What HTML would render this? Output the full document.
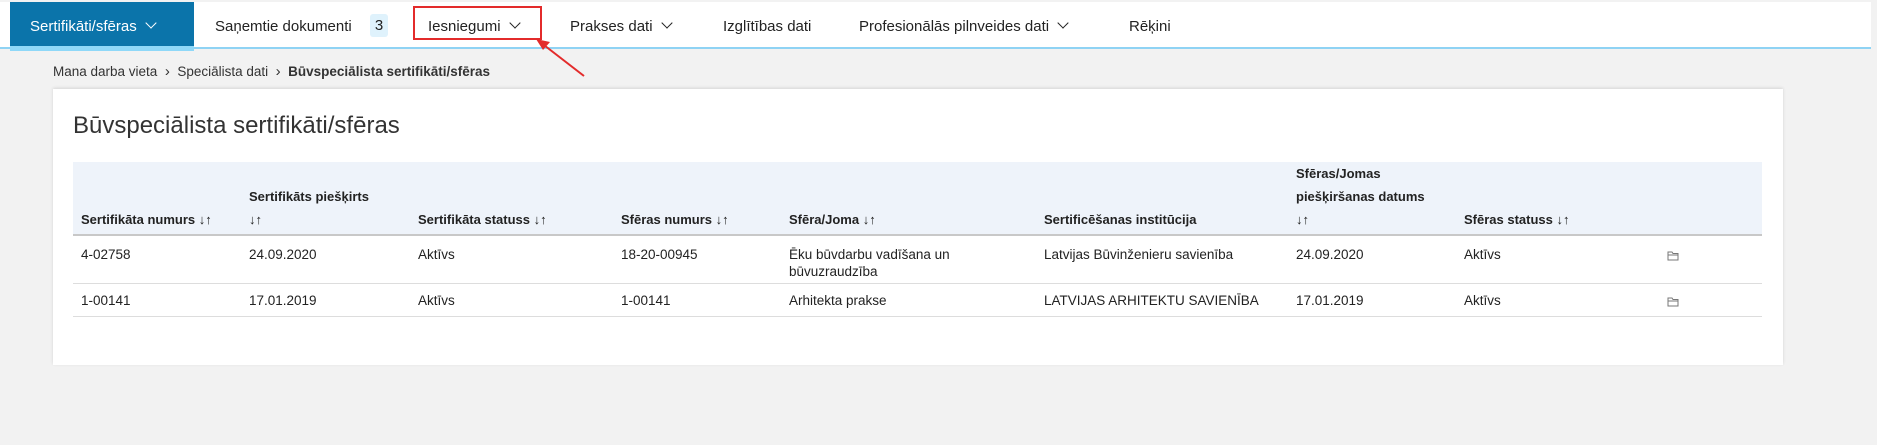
<!DOCTYPE html>
<html><head><meta charset="utf-8"><style>
*{margin:0;padding:0;box-sizing:border-box}
body{width:1877px;height:445px;background:#f2f2f2;font-family:"Liberation Sans",Arial,sans-serif;position:relative;overflow:hidden;color:#222}
.nav{position:absolute;left:0;top:2px;width:1871px;height:47px;background:#fff;border-bottom:2px solid #8fd3f4}
.a{position:absolute;white-space:nowrap}
.tab{left:10px;top:2px;width:184px;height:49px;background:#0b74aa;border-bottom:5px solid #8fd8f8}
.ni{font-size:15px;color:#222;top:18px}
.chev{display:inline-block;width:8px;height:8px;border-right:1.3px solid currentColor;border-bottom:1.3px solid currentColor;transform:rotate(45deg);margin-left:10px;position:relative;top:-4px}
.card{left:53px;top:89px;width:1730px;height:276px;background:#fff;box-shadow:0 -1px 3px rgba(0,0,0,.12)}
.th{font-size:13px;font-weight:bold;color:#222;line-height:23px}
.td{font-size:13.5px;color:#222;line-height:17px}
</style></head><body>
<div class="nav"></div>
<div class="a tab"></div>
<div class="a ni" style="left:30px;color:#fff">Sertifikāti/sfēras<span class="chev"></span></div>
<div class="a ni" style="left:215px">Saņemtie dokumenti</div>
<div class="a" style="left:370px;top:14px;width:18px;height:23px;background:#dff2fc;border-radius:3px;font-size:15px;text-align:center;line-height:23px">3</div>
<div class="a" style="left:413px;top:6px;width:129px;height:34px;border:2px solid #e32b2b"></div>
<div class="a ni" style="left:428px">Iesniegumi<span class="chev"></span></div>
<div class="a ni" style="left:570px">Prakses dati<span class="chev"></span></div>
<div class="a ni" style="left:723px">Izglītības dati</div>
<div class="a ni" style="left:859px">Profesionālās pilnveides dati<span class="chev"></span></div>
<div class="a ni" style="left:1129px">Rēķini</div>
<svg class="a" style="left:530px;top:36px" width="60" height="45"><line x1="54" y1="40" x2="10" y2="6" stroke="#e32b2b" stroke-width="2"/><polygon points="6,3 20,6 13,14" fill="#e32b2b"/></svg>
<div class="a" style="left:53px;top:63px;font-size:13.5px;color:#333">Mana darba vieta &nbsp;<span style="font-size:15px">›</span>&nbsp; Speciālista dati &nbsp;<span style="font-size:15px">›</span>&nbsp; <b>Būvspeciālista sertifikāti/sfēras</b></div>
<div class="a card"></div>
<div class="a" style="left:73px;top:112px;font-size:24px;color:#333">Būvspeciālista sertifikāti/sfēras</div>
<div class="a" style="left:73px;top:162px;width:1689px;height:74px;background:#eef3fa;border-bottom:2px solid #c8c8c8"></div>
<div class="a" style="left:73px;top:283px;width:1689px;height:1px;background:#ddd"></div>
<div class="a" style="left:73px;top:316px;width:1689px;height:1px;background:#ddd"></div>
<div class="a th" style="left:81px;top:208px">Sertifikāta numurs ↓↑</div>
<div class="a th" style="left:249px;top:185px">Sertifikāts piešķirts<br>↓↑</div>
<div class="a th" style="left:418px;top:208px">Sertifikāta statuss ↓↑</div>
<div class="a th" style="left:621px;top:208px">Sfēras numurs ↓↑</div>
<div class="a th" style="left:789px;top:208px">Sfēra/Joma ↓↑</div>
<div class="a th" style="left:1044px;top:208px">Sertificēšanas institūcija</div>
<div class="a th" style="left:1296px;top:162px">Sfēras/Jomas<br>piešķiršanas datums<br>↓↑</div>
<div class="a th" style="left:1464px;top:208px">Sfēras statuss ↓↑</div>
<div class="a td" style="left:81px;top:246px">4-02758</div>
<div class="a td" style="left:249px;top:246px">24.09.2020</div>
<div class="a td" style="left:418px;top:246px">Aktīvs</div>
<div class="a td" style="left:621px;top:246px">18-20-00945</div>
<div class="a td" style="left:789px;top:246px">Ēku būvdarbu vadīšana un<br>būvuzraudzība</div>
<div class="a td" style="left:1044px;top:246px">Latvijas Būvinženieru savienība</div>
<div class="a td" style="left:1296px;top:246px">24.09.2020</div>
<div class="a td" style="left:1464px;top:246px">Aktīvs</div>
<div class="a td" style="left:81px;top:292px">1-00141</div>
<div class="a td" style="left:249px;top:292px">17.01.2019</div>
<div class="a td" style="left:418px;top:292px">Aktīvs</div>
<div class="a td" style="left:621px;top:292px">1-00141</div>
<div class="a td" style="left:789px;top:292px">Arhitekta prakse</div>
<div class="a td" style="left:1044px;top:292px">LATVIJAS ARHITEKTU SAVIENĪBA</div>
<div class="a td" style="left:1296px;top:292px">17.01.2019</div>
<div class="a td" style="left:1464px;top:292px">Aktīvs</div>
<svg class="a" style="left:1667px;top:251px" width="12" height="10"><path d="M1 1h4l1 1.5h5v6.5H1z M1 4h10" fill="none" stroke="#777" stroke-width="1"/></svg>
<svg class="a" style="left:1667px;top:297px" width="12" height="10"><path d="M1 1h4l1 1.5h5v6.5H1z M1 4h10" fill="none" stroke="#777" stroke-width="1"/></svg>
</body></html>
